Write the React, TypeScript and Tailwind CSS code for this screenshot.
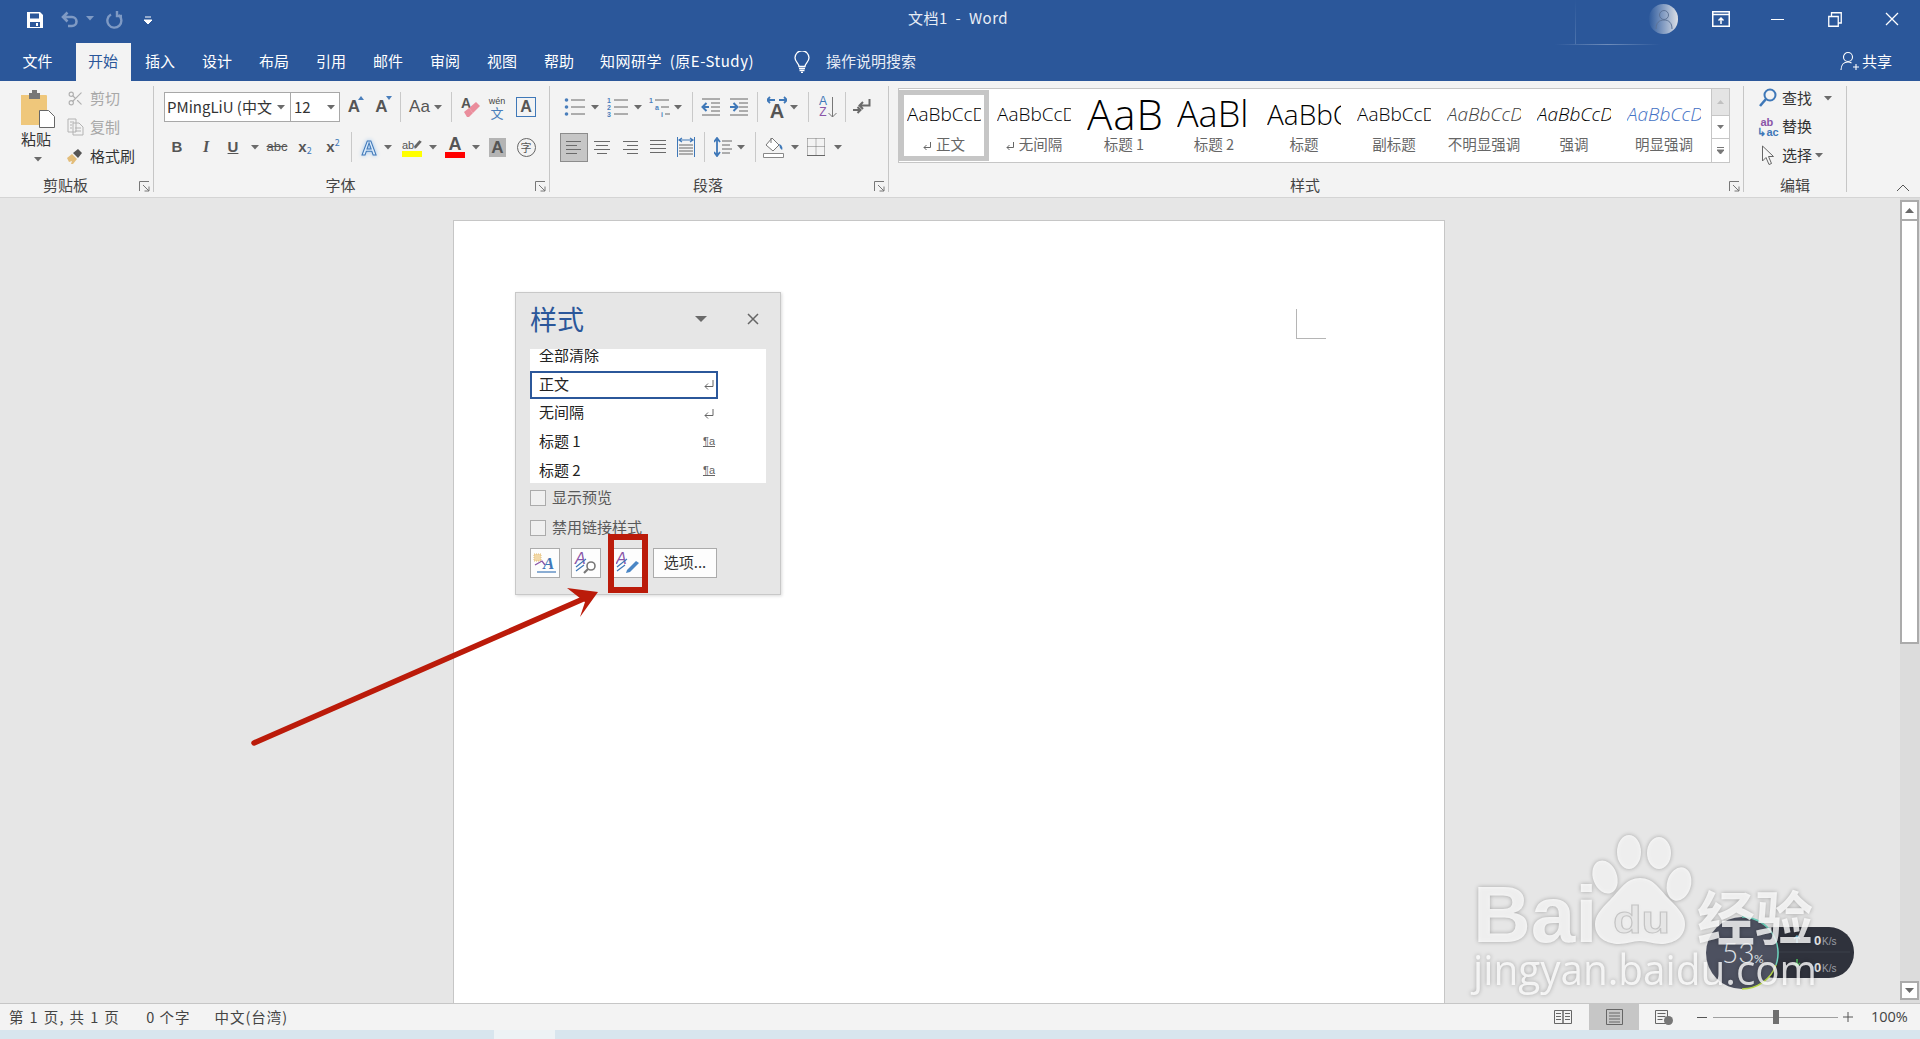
import React from "react";
import { Scissors } from "lucide-react";

const Caret = ({ color = "#6b6b6b", className = "" }: { color?: string; className?: string }) => (
  <svg width="8" height="5" viewBox="0 0 8 5" className={`shrink-0 ${className}`}>
    <path d="M0 0h8L4 4.5z" fill={color} />
  </svg>
);

const Sep = ({ className = "" }: { className?: string }) => (
  <div className={`w-px h-[30px] bg-[#c9c9c9] shrink-0 ${className}`}></div>
);

const Cell = ({ className = "", children }: { className?: string; children?: React.ReactNode }) => (
  <div className={`flex items-center justify-center h-full shrink-0 ${className}`}>{children}</div>
);

const Launcher = () => (
  <svg width="11" height="11" viewBox="0 0 11 11">
    <path d="M.5 10V.5H10M4 4l6 6M10 5.500V10H5.500" fill="none" stroke="#777" strokeWidth="1" />
  </svg>
);

const Group = ({ label, launcher = true, className = "", children }: { label: string; launcher?: boolean; className?: string; children: React.ReactNode }) => (
  <div className={`flex flex-col h-full border-r border-[#c6c6c6] shrink-0 ${className}`}>
    <div className="flex-1 min-h-0">{children}</div>
    <div className="flex h-[12px] items-center">
      <div className="flex-1 text-center text-[15px] leading-[12px] text-[#444] -mt-[2px]">{label}</div>
      {launcher && <div className="w-[22px] flex justify-end pr-[3px] pt-px"><Launcher /></div>}
    </div>
  </div>
);

// horizontal text lines, used by the list / align icons
const Bars = ({ rows, w = 20, h = 18, color = "#6a6a6a" }: { rows: number[][]; w?: number; h?: number; color?: string }) => (
  <svg width={w} height={h} viewBox={`0 0 ${w} ${h}`}>
    {rows.map((r, i) => (
      <line key={i} x1={r[1]} x2={r[2]} y1={r[0] + 0.5} y2={r[0] + 0.5} stroke={color} strokeWidth="1" />
    ))}
  </svg>
);

const Bold = ({ className = "", children }: { className?: string; children: React.ReactNode }) => (
  <span className={`font-['Liberation_Sans',sans-serif] font-bold text-[#555] ${className}`}>{children}</span>
);

const BulletIcon = () => (
  <svg width="22" height="20" viewBox="0 0 22 20">
    <circle cx="2.500" cy="3" r="1.800" fill="#4a7ebb" />
    <circle cx="2.500" cy="10" r="1.800" fill="#4a7ebb" />
    <circle cx="2.500" cy="17" r="1.800" fill="#4a7ebb" />
    <path d="M7 3h14M7 10h14M7 17h14" stroke="#666" strokeWidth="1" />
  </svg>
);

const NumberIcon = () => (
  <svg width="22" height="20" viewBox="0 0 22 20">
    <text x="0" y="6" fontSize="7" fontWeight="700" fill="#4a7ebb" fontFamily="Liberation Sans">1</text>
    <text x="0" y="13" fontSize="7" fontWeight="700" fill="#4a7ebb" fontFamily="Liberation Sans">2</text>
    <text x="0" y="20" fontSize="7" fontWeight="700" fill="#4a7ebb" fontFamily="Liberation Sans">3</text>
    <path d="M7 3h14M7 10h14M7 17h14" stroke="#666" strokeWidth="1" />
  </svg>
);

const MultiIcon = () => (
  <svg width="22" height="20" viewBox="0 0 22 20">
    <text x="0" y="6" fontSize="7" fontWeight="700" fill="#4a7ebb" fontFamily="Liberation Sans">1</text>
    <text x="6" y="13" fontSize="7" fontWeight="700" fill="#4a7ebb" fontFamily="Liberation Sans">a</text>
    <text x="12" y="20" fontSize="7" fontWeight="700" fill="#4a7ebb" fontFamily="Liberation Sans">i</text>
    <path d="M6 3h14M12 10h8M16 17h5" stroke="#666" strokeWidth="1" />
  </svg>
);

const IndentIcon = ({ flip = false }: { flip?: boolean }) => (
  <svg width="20" height="20" viewBox="0 0 20 20">
    <path d="M1 2h18M10 6h9M10 10h9M10 14h9M1 18h18" stroke="#666" strokeWidth="1" />
    {flip ? (
      <path d="M1 10h6M4.500 6l4 4-4 4" fill="none" stroke="#3f78b8" strokeWidth="2" />
    ) : (
      <path d="M8 10H2M5.500 6l-4 4 4 4" fill="none" stroke="#3f78b8" strokeWidth="2" />
    )}
  </svg>
);

const Gallery = ({ label, ret = false, selected = false, children }: { label: string; ret?: boolean; selected?: boolean; children: React.ReactNode }) => (
  <div className={`w-[90px] h-[71px] my-px shrink-0 border-[5px] flex flex-col items-center ${selected ? "border-[#c6c6c6]" : "border-transparent"}`}>
    <div className="h-[38px] w-[74px] overflow-hidden whitespace-nowrap flex items-center font-['Open_Sans',sans-serif] font-light">{children}</div>
    <div className="h-[22px] flex items-center text-[14.5px] text-[#666] whitespace-nowrap">
      {ret && (
        <svg width="9" height="9" viewBox="0 0 9 9" className="mr-1 mt-1">
          <path d="M7.500 0v5.500H1M3.500 3L1 5.500 3.500 8" fill="none" stroke="#666" strokeWidth="1" />
        </svg>
      )}
      {label}
    </div>
  </div>
);

const Tab = ({ label, className = "" }: { label: string; className?: string }) => (
  <div className={`h-full flex items-center justify-center shrink-0 w-[55px] pb-[2px] pr-px ${className}`}>{label}</div>
);

const ListRow = ({ label, mark }: { label: string; mark: "ret" | "link" }) => (
  <div className="h-[29px] w-[188px] flex items-center justify-between pl-[9px] pr-[3px] text-[15px] text-[#222]">
    <span className="-mt-[2px]">{label}</span>
    {mark === "ret" ? (
      <svg width="12" height="10" viewBox="0 0 12 10">
        <path d="M10 0v6.500H2M5 3.500l-3 3 3 3" fill="none" stroke="#666" strokeWidth="1" />
      </svg>
    ) : (
      <span className="text-[11px] leading-[11px] text-[#666] underline font-['Liberation_Sans',sans-serif] -mt-[2px]">¶a</span>
    )}
  </div>
);

const App = () => {
  return (
    <div className="relative w-full h-[1039px] overflow-hidden flex flex-col bg-[#e6e6e6] font-['Noto_Sans_CJK_SC','Noto_Sans',sans-serif] text-[#444]">
      {/* title bar */}
      <div className="relative h-[43px] shrink-0 bg-[#2b579a] grid grid-cols-[1fr_auto_1fr] text-white">
        <div className="flex items-center h-full pl-[26px] pb-[3px]">
          <Cell className="w-[18px]">
            <svg width="18" height="18" viewBox="0 0 18 18">
              <path d="M1 1h13l3 3v13H1z" fill="#fff" />
              <path d="M4 2.500h9v5H4zM4 11h10v5H4z" fill="#2b579a" />
              <path d="M10 12h2v3h-2z" fill="#fff" />
            </svg>
          </Cell>
          <Cell className="w-[20px] ml-[16px]">
            <svg width="20" height="18" viewBox="0 0 20 18">
              <path d="M3 6h9a4.500 4.500 0 0 1 0 9H8M7.500 1.500L3 6l4.500 4.500" fill="none" stroke="#7f9ac4" strokeWidth="2.600" />
            </svg>
          </Cell>
          <Cell className="w-[6px] ml-[7px]"><Caret color="#7f9ac4" className="mb-1" /></Cell>
          <Cell className="w-[20px] ml-[11px]">
            <svg width="18" height="18" viewBox="0 0 18 18">
              <path d="M6 3.500A7 7 0 1 0 13.500 4M12 0v5h5" fill="none" stroke="#7f9ac4" strokeWidth="2.400" />
            </svg>
          </Cell>
          <Cell className="w-[8px] ml-[20px]">
            <svg width="8" height="9" viewBox="0 0 8 9"><path d="M1 1h6M0 4h8L4 8z" stroke="#fff" fill="#fff" strokeWidth="1" /></svg>
          </Cell>
        </div>
        <div className="flex items-center h-full pb-[6px] pr-[4px] text-[15px] tracking-[0.5px] text-[#e8edf5] whitespace-pre">文档1  -  Word</div>
        <div className="flex justify-end h-full pb-[5px]">
          <Cell className="w-[57px]">
            <div className="w-[29px] h-[30px] rounded-full bg-gradient-to-r from-[#2f5b9c] to-[#dde0e6] flex items-center justify-center">
              <svg width="18" height="22" viewBox="0 0 18 22">
                <circle cx="9" cy="7" r="4.500" fill="none" stroke="#5d7396" strokeWidth="1" />
                <path d="M1 21c0-6 3-9 8-9s8 3 8 9" fill="none" stroke="#5d7396" strokeWidth="1" />
              </svg>
            </div>
          </Cell>
          <Cell className="w-[57px]">
            <svg width="18" height="16" viewBox="0 0 18 16">
              <path d="M.75.75h16.500v14.500H.75zM1 3.500h16" fill="none" stroke="#fff" strokeWidth="1.500" />
              <path d="M9 13V7M6.500 9.500L9 7l2.500 2.500" fill="none" stroke="#fff" strokeWidth="1.500" />
            </svg>
          </Cell>
          <Cell className="w-[57px]"><div className="w-[13px] h-px bg-white"></div></Cell>
          <Cell className="w-[57px]">
            <svg width="14" height="15" viewBox="0 0 14 15">
              <path d="M.75 4.500h9.500v9.750H.75zM3.500 4V.75h9.750V11H10.500" fill="none" stroke="#fff" strokeWidth="1.300" />
            </svg>
          </Cell>
          <Cell className="w-[57px]">
            <svg width="14" height="14" viewBox="0 0 14 14"><path d="M1 1l12 12M13 1L1 13" stroke="#fff" strokeWidth="1.300" /></svg>
          </Cell>
        </div>
        <div className="absolute left-[1575px] top-0 w-px h-[45px] bg-gradient-to-b from-[#2b579a] to-[#4e74ad]"></div>
        <div className="absolute left-[1555px] top-[44px] w-[105px] h-px bg-gradient-to-r from-[#2b579a] via-[#6f8dbb] to-[#2b579a] z-10"></div>
      </div>

      {/* tabs */}
      <div className="h-[38px] shrink-0 bg-[#2b579a] flex items-center text-[15px] text-white">
        <Tab label="文件" className="w-[76px]" />
        <Tab label="开始" className="bg-[#f3f3f3] text-[#2b579a]" />
        <Tab label="插入" className="ml-[2px]" />
        <Tab label="设计" className="ml-[2px]" />
        <Tab label="布局" className="ml-[2px]" />
        <Tab label="引用" className="ml-[2px]" />
        <Tab label="邮件" className="ml-[2px]" />
        <Tab label="审阅" className="ml-[2px]" />
        <Tab label="视图" className="ml-[2px]" />
        <Tab label="帮助" className="ml-[2px]" />
        <div className="ml-[13px] pb-[2px] whitespace-pre tracking-[0.5px]">知网研学  (原E-Study)</div>
        <Cell className="w-[20px] ml-[38px]">
          <svg width="16" height="22" viewBox="0 0 16 22">
            <path d="M5 15.500C5 12.500 1 11 1 6.800a7 7 0 0 1 14 0c0 4.200-4 5.700-4 8.700z" fill="none" stroke="#fff" strokeWidth="1.300" />
            <path d="M5 17.500h6M5.500 19.500h5M7 21.500h2" stroke="#fff" strokeWidth="1.300" />
          </svg>
        </Cell>
        <div className="ml-[14px] pb-[2px] text-[#e8edf5]">操作说明搜索</div>
        <div className="ml-auto flex items-center pr-[28px] pb-[2px]">
          <svg width="20" height="20" viewBox="0 0 20 20">
            <circle cx="8" cy="6" r="4.500" fill="none" stroke="#fff" strokeWidth="1.100" />
            <path d="M1 19c0-5 3-8 7-8 1.500 0 2.500.3 3.500 1M13 16h6M16 13v6" fill="none" stroke="#fff" strokeWidth="1.100" />
          </svg>
          <span className="ml-[2px]">共享</span>
        </div>
      </div>

      {/* ribbon */}
      <div className="h-[117px] shrink-0 bg-[#f3f3f3] border-b border-[#d4d4d4] flex py-[5px] text-[15px]">
        <Group label="剪贴板" className="w-[154px]">
          <div className="flex h-full">
            <div className="w-[66px] pl-[10px] flex flex-col items-center pt-[4px]">
              <svg width="36" height="38" viewBox="0 0 36 38" className="shrink-0">
                <path d="M1 5h25a1 1 0 0 1 1 1v28a1 1 0 0 1-1 1H1z" fill="#efc77b" />
                <path d="M9 3h3V0h5v3h3v6H9z" fill="#777" />
                <path d="M19.500 20.500h9l6 6v11h-15z" fill="#fff" stroke="#666" strokeWidth="1" />
              </svg>
              <div className="h-[22px] flex items-center text-[#333] whitespace-nowrap mr-[4px]">粘贴</div>
              <div className="h-[18px] flex items-center"><Caret /></div>
            </div>
            <div className="flex flex-col gap-[5px]">
              <div className="flex items-center h-[24px]">
                <Cell className="w-[18px]"><Scissors size={17} color="#b0b0b0" strokeWidth={1.6} /></Cell>
                <span className="ml-[6px] text-[#a8a8a8]">剪切</span>
              </div>
              <div className="flex items-center h-[24px]">
                <Cell className="w-[18px]">
                  <svg width="17" height="18" viewBox="0 0 17 18">
                    <path d="M1 1h8v13H1zM6 5h6l4 4v8H6zM3 4h4M3 7h2M3 10h2M8 10h6M8 13h6" fill="#f3f3f3" stroke="#b3b3b3" strokeWidth="1" />
                  </svg>
                </Cell>
                <span className="ml-[6px] text-[#a8a8a8]">复制</span>
              </div>
              <div className="flex items-center h-[24px]">
                <Cell className="w-[18px]">
                  <svg width="18" height="18" viewBox="0 0 18 18">
                    <path d="M1 11l5-4 5 5-4 5H5l1-3-3 1z" fill="#e3bd7a" />
                    <path d="M7 6l5-4 4 4-4 5z" fill="#555" />
                  </svg>
                </Cell>
                <span className="ml-[6px] text-[#333]">格式刷</span>
              </div>
            </div>
          </div>
        </Group>

        <Group label="字体" className="w-[396px]">
          <div className="flex flex-col gap-[10px] pt-[6px]">
            <div className="flex h-[30px] items-center pl-[10px]">
              <div className="w-[127px] h-[30px] bg-white border border-[#a8a8a8] flex items-center pl-[2px] pr-[5px] text-[#333] whitespace-nowrap overflow-hidden">
                <span className="flex-1 overflow-hidden">PMingLiU (中文</span>
                <Caret className="ml-[2px]" />
              </div>
              <div className="w-[50px] h-[30px] -ml-px bg-white border border-[#a8a8a8] flex items-center pl-[3px] pr-[4px] text-[#333]">
                <span className="flex-1">12</span>
                <Caret />
              </div>
              <Cell className="w-[28px]">
                <div className="relative">
                  <Bold className="text-[17px]">A</Bold>
                  <svg width="6" height="4" viewBox="0 0 6 4" className="absolute -right-[4px] top-[2px]"><path d="M0 4h6L3 0z" fill="#4a7ebb" /></svg>
                </div>
              </Cell>
              <Cell className="w-[27px]">
                <div className="relative">
                  <Bold className="text-[17px]">A</Bold>
                  <svg width="6" height="4" viewBox="0 0 6 4" className="absolute -right-[4px] top-[2px]"><path d="M0 0h6L3 4z" fill="#4a7ebb" /></svg>
                </div>
              </Cell>
              <Sep className="ml-[5px]" />
              <Cell className="w-[29px] ml-[4px]"><span className="font-['Liberation_Sans',sans-serif] text-[17px] text-[#555]">Aa</span></Cell>
              <Cell className="w-[8px]"><Caret /></Cell>
              <Sep className="ml-[9px]" />
              <Cell className="w-[38px]">
                <div className="relative w-[20px] h-[22px]">
                  <Bold className="absolute left-0 -top-[3px] text-[14px]">A</Bold>
                  <svg width="20" height="22" viewBox="0 0 20 22" className="absolute left-0 top-0"><path d="M8 12l7-6 4 4-7 7z" fill="#ea8d9c" /><path d="M3 16l5-4 4 5-4 4H6z" fill="#ea8d9c" /></svg>
                </div>
              </Cell>
              <Cell className="w-[14px]">
                <div className="flex flex-col items-center leading-none">
                  <span className="text-[9px] leading-[10px] text-[#444] font-['Liberation_Sans',sans-serif]">wén</span>
                  <span className="text-[13px] leading-[13px] text-[#4a7ebb]">文</span>
                </div>
              </Cell>
              <div className="ml-[12px] w-[20px] h-[20px] border border-[#3f78b8] flex items-center justify-center">
                <Bold className="text-[16px] leading-none">A</Bold>
              </div>
            </div>
            <div className="flex h-[30px] items-center pl-[9px]">
              <Cell className="w-[28px]"><Bold className="text-[15px]">B</Bold></Cell>
              <Cell className="w-[28px] ml-px"><span className="font-['Liberation_Serif',serif] italic font-bold text-[16px] text-[#555]">I</span></Cell>
              <Cell className="w-[26px]"><Bold className="text-[15px] underline">U</Bold></Cell>
              <Cell className="w-[8px] ml-[5px]"><Caret /></Cell>
              <Cell className="w-[26px] ml-[5px]"><span className="text-[13px] line-through text-[#555] font-['Liberation_Sans',sans-serif]">abc</span></Cell>
              <Cell className="w-[28px] ml-px"><Bold className="text-[15px]">x</Bold><span className="text-[9px] text-[#3f78b8] mt-2">2</span></Cell>
              <Cell className="w-[28px]"><Bold className="text-[15px]">x</Bold><span className="text-[9px] text-[#3f78b8] -mt-2">2</span></Cell>
              <Sep className="ml-[4px]" />
              <Cell className="w-[30px] ml-[2px]"><span className="font-['Liberation_Sans',sans-serif] font-bold text-[21px] leading-none text-[#dcebfa] [-webkit-text-stroke:1px_#3f78b8] drop-shadow-[0_0_2px_#9cc4ec]">A</span></Cell>
              <Cell className="w-[8px]"><Caret /></Cell>
              <Cell className="w-[30px] ml-[5px]">
                <div className="flex flex-col items-center">
                  <div className="flex items-end w-[20px] h-[14px]">
                    <span className="text-[11px] leading-[12px] text-[#555] font-['Liberation_Sans',sans-serif]">ab</span>
                    <svg width="10" height="14" viewBox="0 0 10 14"><path d="M1 13l-1-3 7-8 3 2-7 8z" fill="#666" /></svg>
                  </div>
                  <div className="w-[20px] h-[6px] bg-[#ffff00]"></div>
                </div>
              </Cell>
              <Cell className="w-[8px] ml-[2px]"><Caret /></Cell>
              <Cell className="w-[30px] ml-[3px]">
                <div className="flex flex-col items-center">
                  <Bold className="text-[18px] leading-[16px]">A</Bold>
                  <div className="w-[20px] h-[6px] bg-[#ff0000]"></div>
                </div>
              </Cell>
              <Cell className="w-[8px] ml-[2px]"><Caret /></Cell>
              <Cell className="w-[25px] ml-[5px]">
                <div className="w-[17px] h-[19px] bg-[#b4b4b4] flex items-center justify-center"><Bold className="text-[17px] leading-none">A</Bold></div>
              </Cell>
              <Cell className="w-[26px] ml-[3px]">
                <div className="w-[19px] h-[19px] rounded-full border border-[#666] flex items-center justify-center text-[11px] leading-none text-[#555]">字</div>
              </Cell>
            </div>
          </div>
        </Group>

        <Group label="段落" className="w-[339px]">
          <div className="flex flex-col gap-[10px] pt-[6px]">
            <div className="flex h-[30px] items-center pl-[12px]">
              <Cell className="w-[26px]"><BulletIcon /></Cell>
              <Cell className="w-[8px] ml-[3px]"><Caret /></Cell>
              <Cell className="w-[27px] ml-[5px]"><NumberIcon /></Cell>
              <Cell className="w-[8px] ml-[3px]"><Caret /></Cell>
              <Cell className="w-[26px] ml-[5px]"><MultiIcon /></Cell>
              <Cell className="w-[8px] ml-px"><Caret /></Cell>
              <Sep className="ml-[10px]" />
              <Cell className="w-[26px] ml-[5px]"><IndentIcon /></Cell>
              <Cell className="w-[26px] ml-[2px]"><IndentIcon flip /></Cell>
              <Sep className="ml-[5px]" />
              <Cell className="w-[30px] ml-[4px]">
                <div className="flex flex-col items-center">
                  <svg width="20" height="8" viewBox="0 0 20 8"><path d="M0 4h8M3 1L0 4l3 3M20 4h-8M17 1l3 3-3 3" fill="none" stroke="#3f78b8" strokeWidth="1.800" /></svg>
                  <Bold className="text-[20px] leading-[15px]">A</Bold>
                </div>
              </Cell>
              <Cell className="w-[8px] -ml-[2px]"><Caret /></Cell>
              <Sep className="ml-[10px]" />
              <Cell className="w-[26px] ml-[6px]">
                <div className="flex items-center">
                  <div className="flex flex-col items-center font-['Liberation_Sans',sans-serif] text-[12px] leading-[11px]">
                    <span className="text-[#3f78b8]">A</span>
                    <span className="text-[#8a55a8]">Z</span>
                  </div>
                  <svg width="9" height="21" viewBox="0 0 9 21" className="ml-px"><path d="M4.500 0v20M.5 16l4 4 4-4" fill="none" stroke="#777" strokeWidth="1" /></svg>
                </div>
              </Cell>
              <Sep className="ml-[4px]" />
              <Cell className="w-[26px] ml-[3px]">
                <svg width="18" height="16" viewBox="0 0 18 16">
                  <path d="M16.500 0v6.500H7M10 3L6.500 6.500 10 10M0 11h7M4.500 8l3 3-3 3" fill="none" stroke="#6a6a6a" strokeWidth="2" />
                </svg>
              </Cell>
            </div>
            <div className="flex h-[30px] items-center pl-[10px]">
              <div className="w-[28px] h-[29px] bg-[#c6c6c6] border border-[#8c8c8c] flex items-center justify-center shrink-0">
                <Bars w={16} h={14} rows={[[1, 0, 15], [5, 0, 11], [9, 0, 15], [13, 0, 11]]} />
              </div>
              <Cell className="w-[28px]"><Bars w={16} h={14} rows={[[1, 0, 16], [5, 2, 14], [9, 0, 16], [13, 3, 13]]} /></Cell>
              <Cell className="w-[28px]"><Bars w={16} h={14} rows={[[1, 1, 16], [5, 5, 16], [9, 1, 16], [13, 5, 16]]} /></Cell>
              <Cell className="w-[28px]"><Bars w={16} h={16} rows={[[1, 0, 16], [5, 0, 16], [9, 0, 16], [13, 0, 16]]} /></Cell>
              <Cell className="w-[28px]">
                <svg width="18" height="20" viewBox="0 0 18 20">
                  <path d="M.5 0v20M17.500 0v20" stroke="#3f78b8" strokeWidth="1" />
                  <path d="M2 3h14M5 1L2 3l3 2M13 1l3 2-3 2" fill="none" stroke="#3f78b8" strokeWidth="1.200" />
                  <path d="M2 8h14M2 11h14M2 14h14M2 17h14" stroke="#666" strokeWidth="1" />
                </svg>
              </Cell>
              <Sep className="ml-[4px]" />
              <Cell className="w-[29px] ml-[3px]">
                <svg width="18" height="20" viewBox="0 0 18 20">
                  <path d="M3 1v18M0 5l3-4 3 4M0 15l3 4 3-4" fill="none" stroke="#3f78b8" strokeWidth="1.800" />
                  <path d="M8 4h10M8 8h8M8 12h10M8 16h8" stroke="#666" strokeWidth="1" />
                </svg>
              </Cell>
              <Cell className="w-[8px]"><Caret /></Cell>
              <Sep className="ml-[10px]" />
              <Cell className="w-[31px] ml-[2px]">
                <svg width="21" height="21" viewBox="0 0 21 21">
                  <path d="M9 1l7 7-6 6-7-6z" fill="#fff" stroke="#777" strokeWidth="1" />
                  <path d="M8 1v5" stroke="#777" strokeWidth="1" />
                  <path d="M16 7c3 1 4 4 3 6l-2-2z" fill="#3f78b8" />
                  <path d="M.5 16.500h20v4H.5z" fill="#fff" stroke="#888" strokeWidth="1" />
                </svg>
              </Cell>
              <Cell className="w-[8px] ml-[2px]"><Caret /></Cell>
              <Cell className="w-[26px] ml-[4px]">
                <svg width="18" height="18" viewBox="0 0 18 18">
                  <path d="M.5.5h17M.5 8.500h17M.5.5v17M9 .5v17M17.500.5v17" fill="none" stroke="#777" strokeWidth="1" strokeDasharray="1 1" />
                  <path d="M0 17.500h18" stroke="#666" strokeWidth="1" />
                </svg>
              </Cell>
              <Cell className="w-[8px] ml-[5px]"><Caret /></Cell>
            </div>
          </div>
        </Group>

        <Group label="样式" className="w-[855px]">
          <div className="pl-[9px] pt-[2px]">
            <div className="w-[832px] h-[75px] bg-white border border-[#c6c6c6] flex text-black">
              <Gallery label="正文" ret selected><span className="text-[19px] leading-none">AaBbCcDd</span></Gallery>
              <Gallery label="无间隔" ret><span className="text-[19px] leading-none">AaBbCcDd</span></Gallery>
              <Gallery label="标题 1"><span className="text-[42px] leading-none tracking-[1px]">AaB</span></Gallery>
              <Gallery label="标题 2"><span className="text-[36px] leading-none">AaBl</span></Gallery>
              <Gallery label="标题"><span className="text-[28px] leading-none">AaBbC</span></Gallery>
              <Gallery label="副标题"><span className="text-[19px] leading-none">AaBbCcDd</span></Gallery>
              <Gallery label="不明显强调"><span className="text-[19px] leading-none italic text-[#404040]">AaBbCcDd</span></Gallery>
              <Gallery label="强调"><span className="text-[19px] leading-none italic">AaBbCcDd</span></Gallery>
              <Gallery label="明显强调"><span className="text-[19px] leading-none italic text-[#4472c4]">AaBbCcDd</span></Gallery>
              <div className="ml-auto w-[18px] h-full flex flex-col border-l border-[#c6c6c6] shrink-0">
                <div className="h-[26px] bg-[#e4e4e4] flex items-center justify-center">
                  <svg width="7" height="4" viewBox="0 0 7 4"><path d="M0 4h7L3.500 0z" fill="#c0c0c0" /></svg>
                </div>
                <div className="h-[24px] border-y border-[#c6c6c6] flex items-center justify-center">
                  <svg width="7" height="4" viewBox="0 0 7 4"><path d="M0 0h7L3.500 4z" fill="#777" /></svg>
                </div>
                <div className="flex-1 flex items-center justify-center">
                  <svg width="7" height="8" viewBox="0 0 7 8"><path d="M0 .5h7M0 3h7L3.500 7z" stroke="#777" strokeWidth="1" fill="#777" /></svg>
                </div>
              </div>
            </div>
          </div>
        </Group>

        <Group label="编辑" launcher={false} className="w-[103px]">
          <div className="flex flex-col gap-[4px] pl-[14px] text-[#333]">
            <div className="flex items-center h-[24px]">
              <Cell className="w-[20px]">
                <svg width="18" height="20" viewBox="0 0 18 20">
                  <circle cx="11" cy="7" r="5.500" fill="none" stroke="#3f78b8" strokeWidth="2" />
                  <path d="M7 11l-6 7" stroke="#3f78b8" strokeWidth="2.600" />
                </svg>
              </Cell>
              <span className="ml-[4px]">查找</span>
              <Caret className="ml-[12px]" />
            </div>
            <div className="flex items-center h-[25px]">
              <Cell className="w-[20px]">
                <div className="flex flex-col items-start font-['Liberation_Sans',sans-serif] text-[11px] leading-[10px] font-bold">
                  <span className="text-[#8a55a8] ml-[3px]">ab</span>
                  <span className="text-[#3f78b8]">↳ac</span>
                </div>
              </Cell>
              <span className="ml-[4px]">替换</span>
            </div>
            <div className="flex items-center h-[24px]">
              <Cell className="w-[20px]">
                <svg width="14" height="21" viewBox="0 0 14 21">
                  <path d="M1.500 1v15l3.500-3.500 3 7 2.500-1-3-7h5z" fill="#f7f7f7" stroke="#666" strokeWidth="1" />
                </svg>
              </Cell>
              <span className="ml-[4px]">选择</span>
              <Caret className="ml-[3px]" />
            </div>
          </div>
        </Group>

        <div className="flex-1 flex items-end justify-end pr-[10px]">
          <svg width="14" height="8" viewBox="0 0 14 8"><path d="M1 7l6-6 6 6" fill="none" stroke="#555" strokeWidth="1" /></svg>
        </div>
      </div>

      {/* document + scrollbar */}
      <div className="flex-1 min-h-0 flex">
        <div className="flex-1 min-w-0 pl-[453px] pt-[22px]">
          <div className="w-[992px] h-full bg-white border-x border-t border-[#c6c6c6]"></div>
        </div>
        <div className="w-[20px] shrink-0 bg-[#dcdcdc] flex flex-col pt-[2px] pr-px">
          <div className="h-[19px] bg-white border-2 border-[#ababab] border-b-0 flex items-center justify-center">
            <svg width="9" height="5" viewBox="0 0 9 5"><path d="M0 5h9L4.500 0z" fill="#6a6a6a" /></svg>
          </div>
          <div className="h-[425px] bg-white border-2 border-[#ababab]"></div>
          <div className="flex-1"></div>
          <div className="h-[19px] mb-[3px] bg-white border-2 border-[#ababab] flex items-center justify-center">
            <svg width="9" height="5" viewBox="0 0 9 5"><path d="M0 0h9L4.500 5z" fill="#6a6a6a" /></svg>
          </div>
        </div>
      </div>

      {/* status bar */}
      <div className="h-[27px] shrink-0 bg-[#f3f3f3] border-t border-[#c6c6c6] flex items-center text-[14.5px] text-[#444]">
        <span className="ml-[9px] tracking-[1.400px] whitespace-pre">第 1 页, 共 1 页</span>
        <span className="ml-[26px] tracking-[1px]">0 个字</span>
        <span className="ml-[24px] tracking-[1px]">中文(台湾)</span>
        <Cell className="w-[26px] ml-auto">
          <svg width="18" height="15" viewBox="0 0 18 15">
            <path d="M.5.5H9v13H.5zM9 .5h8.500v13H9zM2 3.500h5M2 6.500h5M2 9.500h5M11 3.500h5M11 6.500h5M11 9.500h5" fill="none" stroke="#666" strokeWidth="1" />
          </svg>
        </Cell>
        <Cell className="w-[50px] ml-[13px] bg-[#c6c6c6]">
          <svg width="17" height="16" viewBox="0 0 17 16">
            <path d="M.5.5h16v15H.5zM3 4h11M3 7h11M3 10h11M3 13h11" fill="none" stroke="#666" strokeWidth="1" />
          </svg>
        </Cell>
        <Cell className="w-[18px] ml-[16px]">
          <svg width="18" height="15" viewBox="0 0 18 15">
            <path d="M.5.5h12v13H.5zM2.500 3.500h8M2.500 6.500h8M2.500 9.500h5" fill="none" stroke="#666" strokeWidth="1" />
            <circle cx="13.500" cy="10.500" r="4.500" fill="#777" />
          </svg>
        </Cell>
        <div className="w-[10px] h-px bg-[#555] ml-[24px]"></div>
        <div className="w-[125px] h-px bg-[#a0a0a0] ml-[6px] flex items-center pl-[60px]">
          <div className="w-[6px] h-[14px] bg-[#6f6f6f]"></div>
        </div>
        <svg width="10" height="10" viewBox="0 0 10 10" className="ml-[5px]"><path d="M0 5h10M5 0v10" stroke="#555" strokeWidth="1" /></svg>
        <span className="ml-[18px] w-[49px] shrink-0 font-['Open_Sans',sans-serif]">100%</span>
      </div>

      {/* desktop strip under the window */}
      <div className="relative h-[9px] shrink-0 bg-[#d8e5ee] overflow-hidden">
        <div className="absolute left-[494px] top-0 w-[61px] h-full bg-[#edf2f5]"></div>
        <div className="absolute left-[1790px] top-[3px] text-[15px] text-[#222] font-['Liberation_Sans',sans-serif]">10:00</div>
      </div>

      {/* page marker */}
      <div className="absolute left-[1296px] top-[309px] w-[30px] h-[30px] border-l border-b border-[#b5b5b5]"></div>

      {/* 样式 pane */}
      <div className="absolute left-[515px] top-[292px] w-[266px] h-[303px] bg-[#e6e6e6] border border-[#c8c8c8] shadow-[1px_1px_3px_rgba(0,0,0,0.15)] px-[14px] flex flex-col">
        <div className="h-[56px] shrink-0 flex items-center pr-[7px]">
          <span className="text-[27px] leading-none text-[#2b579a] mb-[6px]">样式</span>
          <svg width="12" height="6" viewBox="0 0 12 6" className="ml-auto mb-[4px]"><path d="M0 0h12L6 6z" fill="#6a6a6a" /></svg>
          <svg width="12" height="12" viewBox="0 0 12 12" className="ml-[40px] mb-[4px]"><path d="M1 1l10 10M11 1L1 11" stroke="#666" strokeWidth="1.500" /></svg>
        </div>
        <div className="h-[134px] shrink-0 bg-white overflow-hidden">
          <div className="-mt-[8px] mb-px h-[29px] flex items-center pl-[9px] text-[15px] text-[#222]">全部清除</div>
          <div className="h-[28px] w-[188px] border-2 border-[#2b579a] flex items-center justify-between pl-[7px] pr-px text-[15px] text-[#222]">
            <span className="-mt-[2px]">正文</span>
            <svg width="12" height="10" viewBox="0 0 12 10"><path d="M10 0v6.500H2M5 3.500l-3 3 3 3" fill="none" stroke="#666" strokeWidth="1" /></svg>
          </div>
          <ListRow label="无间隔" mark="ret" />
          <ListRow label="标题 1" mark="link" />
          <ListRow label="标题 2" mark="link" />
        </div>
        <div className="h-[30px] flex items-center shrink-0 text-[15px] text-[#595959]">
          <div className="w-[16px] h-[16px] bg-[#f0f0f0] border border-[#ababab]"></div>
          <span className="ml-[6px] -mt-[2px]">显示预览</span>
        </div>
        <div className="h-[30px] flex items-center shrink-0 text-[15px] text-[#595959]">
          <div className="w-[16px] h-[16px] bg-[#f0f0f0] border border-[#ababab]"></div>
          <span className="ml-[6px] -mt-[2px]">禁用链接样式</span>
        </div>
        <div className="mt-[5px] flex h-[30px] shrink-0">
          <div className="w-[30px] h-full bg-[#fdfdfd] border border-[#ababab] flex items-center justify-center">
            <svg width="24" height="22" viewBox="0 0 24 22">
              <path d="M1 2h7v7H1z" fill="#f3d9a8" stroke="#e3bd7a" strokeWidth="1" strokeDasharray="1 1" />
              <path d="M2 13l7-4 3 4" fill="none" stroke="#8a55a8" strokeWidth="1.300" />
              <text x="10" y="17" fontSize="17" fontWeight="700" fontStyle="italic" fill="#3f78b8" fontFamily="Liberation Serif">A</text>
              <path d="M4 20h19" stroke="#3f78b8" strokeWidth="1.200" />
            </svg>
          </div>
          <div className="w-[30px] h-full ml-[11px] bg-[#fdfdfd] border border-[#ababab] flex items-center justify-center">
            <svg width="24" height="24" viewBox="0 0 24 24">
              <text x="1" y="13" fontSize="16" fontStyle="italic" fill="#8a55a8" fontFamily="Liberation Sans">A</text>
              <path d="M2 16l10-8M2 20l8-6" stroke="#3f78b8" strokeWidth="1.200" />
              <circle cx="17" cy="15" r="4" fill="#fff" stroke="#777" strokeWidth="1.600" />
              <path d="M14 18l-4 4" stroke="#777" strokeWidth="2.200" />
            </svg>
          </div>
          <div className="w-[30px] h-full ml-[12px] bg-[#fdfdfd] border border-[#ababab] flex items-center justify-center">
            <svg width="24" height="24" viewBox="0 0 24 24">
              <text x="0" y="13" fontSize="16" fontStyle="italic" fill="#8a55a8" fontFamily="Liberation Sans">A</text>
              <path d="M1 16l10-8M1 20l8-6" stroke="#3f78b8" strokeWidth="1.200" />
              <path d="M11 19l9-9 3 2-9 9-4 1z" fill="#4a86c5" />
            </svg>
          </div>
          <div className="w-[64px] h-full ml-[10px] bg-[#fdfdfd] border border-[#ababab] flex items-center justify-center text-[15px] text-[#333] pb-[2px]">选项...</div>
        </div>
      </div>

      {/* red annotation */}
      <div className="absolute left-[608px] top-[534px] w-[40px] h-[59px] border-[6px] border-[#bb1b0a]"></div>
      <svg className="absolute left-0 top-0" width="1920" height="1039" viewBox="0 0 1920 1039">
        <path d="M254 743L590 596" stroke="#bb1b0a" strokeWidth="5.500" strokeLinecap="round" />
        <path d="M598 592L567 588L585 602L580 617z" fill="#bb1b0a" />
      </svg>

      {/* network widget */}
      <svg className="absolute left-[1690px] top-[900px]" width="180" height="100" viewBox="0 0 180 100">
        <rect x="60" y="27" width="104" height="51" rx="25" fill="#2f323c" />
        <path d="M70 52h90" stroke="#3d404a" strokeWidth="1" />
        <circle cx="52" cy="53" r="36" fill="#4d5160" />
        <path d="M52 17A36 36 0 0 1 86 65" fill="none" stroke="#6fd6c0" strokeWidth="1.500" />
        <path d="M86 65A36 36 0 0 1 52 89" fill="none" stroke="#b9d94a" strokeWidth="1.500" />
        <text x="32" y="63" fontSize="28" fill="#dfe1e6" fontFamily="Lato" fontWeight="300">53</text>
        <text x="64" y="63" fontSize="12" fill="#dfe1e6" fontFamily="Lato">%</text>
        <path d="M107 36v7M104 39l3-3 3 3" fill="none" stroke="#7fd0f0" strokeWidth="1.500" />
        <path d="M107 66v-7M104 63l3 3 3-3" fill="none" stroke="#4fc05a" strokeWidth="1.500" />
        <text x="124" y="45" fontSize="13" fontWeight="700" fill="#e0e0e0" fontFamily="Liberation Sans">0</text>
        <text x="132" y="45" fontSize="10" fill="#9a9da6" fontFamily="Liberation Sans">K/s</text>
        <text x="124" y="72" fontSize="13" fontWeight="700" fill="#e0e0e0" fontFamily="Liberation Sans">0</text>
        <text x="132" y="72" fontSize="10" fill="#9a9da6" fontFamily="Liberation Sans">K/s</text>
      </svg>

      {/* baidu watermark */}
      <svg className="absolute left-[1440px] top-[800px] drop-shadow-[0_0_2px_rgba(0,0,0,0.35)]" width="400" height="210" viewBox="0 0 400 210">
        <g fill="#ffffff" fillOpacity="0.8">
          <text x="33" y="142" fontSize="80" fontWeight="700" fontFamily="Liberation Sans">Bai</text>
          <ellipse cx="189" cy="52" rx="12" ry="17" />
          <ellipse cx="219" cy="53" rx="12" ry="16" />
          <ellipse cx="165" cy="77" rx="12" ry="17" transform="rotate(-20 165 77)" />
          <ellipse cx="239" cy="84" rx="12" ry="17" transform="rotate(15 239 84)" />
          <path d="M200 78c14 0 20 12 30 22 10 10 15 16 15 24 0 14-12 20-24 20-8 0-14-3-21-3s-13 3-21 3c-12 0-24-6-24-20 0-8 5-14 15-24 10-10 16-22 30-22z" />
          <text x="257" y="140" fontSize="58" fontWeight="700" fontFamily="Noto Sans CJK SC">经验</text>
          <text x="33" y="185" fontSize="42" textLength="344" lengthAdjust="spacingAndGlyphs" fontFamily="Open Sans">jingyan.baidu.com</text>
        </g>
        <text x="173" y="133" fontSize="38" textLength="57" lengthAdjust="spacingAndGlyphs" fontWeight="700" fill="#e6e6e6" stroke="#c4c4c4" strokeWidth="1" fontFamily="Liberation Sans">du</text>
      </svg>
    </div>
  );
};

export default App;
